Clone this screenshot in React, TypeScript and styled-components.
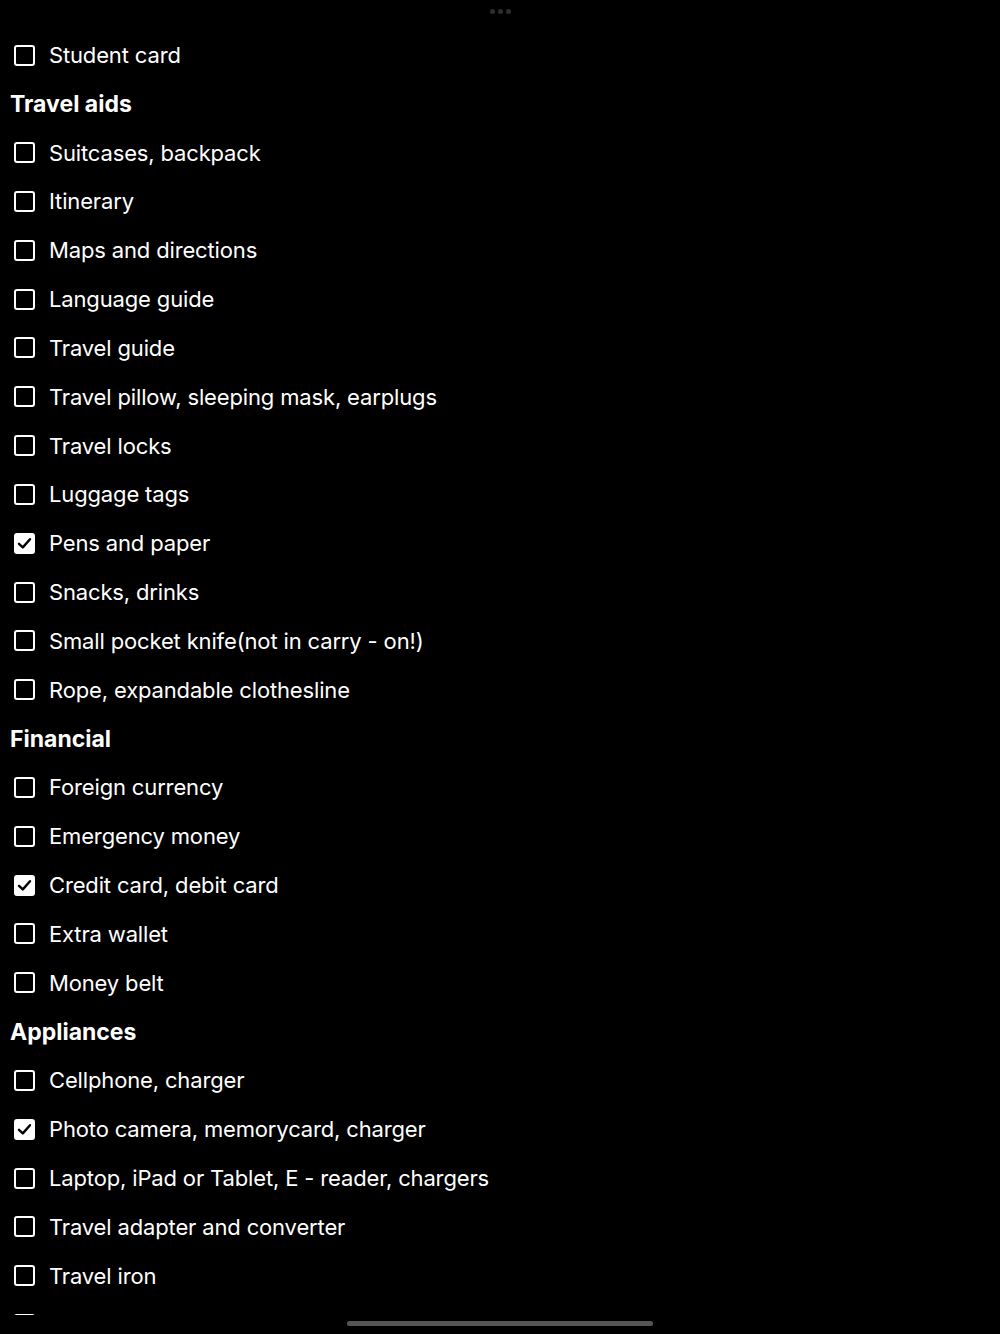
import React from "react";
import styled, { createGlobalStyle } from "styled-components";

const Global = createGlobalStyle`
  html, body { margin: 0; padding: 0; background: #000; }
  body { font-family: Inter, "Noto Sans", sans-serif; color: #fff; }
`;

const Screen = styled.div`
  width: 1000px;
  height: 1334px;
  background: #000;
  position: relative;
  overflow: hidden;
`;

const Grabber = styled.div`
  position: absolute;
  top: 9px;
  left: 0;
  right: 0;
  display: flex;
  justify-content: center;
  gap: 3px;
`;

const Dot = styled.span`
  width: 5px;
  height: 5px;
  border-radius: 50%;
  background: #2e2e2e;
`;

const Scroller = styled.div`
  height: 1315px;
  overflow: hidden;
`;

const List = styled.div`
  display: flex;
  flex-direction: column;
  padding-top: 30.6px;
`;

const Row = styled.div`
  height: 48.84px;
  display: flex;
  align-items: center;
  padding-left: 14px;
  gap: 14px;
  flex-shrink: 0;
`;

const Header = styled.div`
  height: 48.84px;
  display: flex;
  align-items: center;
  padding-left: 10px;
  font-size: 23px;
  font-weight: 700;
  letter-spacing: 0px;
  flex-shrink: 0;
`;

const Box = styled.span<{ $checked?: boolean }>`
  width: 21px;
  height: 21px;
  box-sizing: border-box;
  border: 2px solid #fff;
  border-radius: 3px;
  background: ${(p) => (p.$checked ? "#fff" : "transparent")};
  display: flex;
  align-items: center;
  justify-content: center;
  flex-shrink: 0;
`;

const Label = styled.span`
  font-size: 22px;
  font-weight: 400;
  letter-spacing: -0.15px;
  white-space: nowrap;
`;

const HomeBar = styled.div`
  position: absolute;
  left: 347px;
  width: 306px;
  bottom: 8px;
  height: 5px;
  border-radius: 3px;
  background: #555;
`;

type Item = { h?: string; t?: string; c?: boolean };

const items: Item[] = [
  { t: "Student card" },
  { h: "Travel aids" },
  { t: "Suitcases, backpack" },
  { t: "Itinerary" },
  { t: "Maps and directions" },
  { t: "Language guide" },
  { t: "Travel guide" },
  { t: "Travel pillow, sleeping mask, earplugs" },
  { t: "Travel locks" },
  { t: "Luggage tags" },
  { t: "Pens and paper", c: true },
  { t: "Snacks, drinks" },
  { t: "Small pocket knife(not in carry - on!)" },
  { t: "Rope, expandable clothesline" },
  { h: "Financial" },
  { t: "Foreign currency" },
  { t: "Emergency money" },
  { t: "Credit card, debit card", c: true },
  { t: "Extra wallet" },
  { t: "Money belt" },
  { h: "Appliances" },
  { t: "Cellphone, charger" },
  { t: "Photo camera, memorycard, charger", c: true },
  { t: "Laptop, iPad or Tablet, E - reader, chargers" },
  { t: "Travel adapter and converter" },
  { t: "Travel iron" },
  { t: "" },
];

const Check = () => (
  <svg width="15" height="13" viewBox="0 0 15 13">
    <path d="M2 6.8 L5.8 10.4 L13 2.2" fill="none" stroke="#000" strokeWidth="2.4" strokeLinecap="round" strokeLinejoin="round" />
  </svg>
);

export default function App() {
  return (
    <Screen>
      <Global />
      <Grabber>
        <Dot />
        <Dot />
        <Dot />
      </Grabber>
      <Scroller>
        <List>
          {items.map((it, i) =>
            it.h ? (
              <Header key={i}>{it.h}</Header>
            ) : (
              <Row key={i}>
                <Box $checked={it.c}>{it.c && <Check />}</Box>
                {it.t && <Label>{it.t}</Label>}
              </Row>
            )
          )}
        </List>
      </Scroller>
      <HomeBar />
    </Screen>
  );
}
